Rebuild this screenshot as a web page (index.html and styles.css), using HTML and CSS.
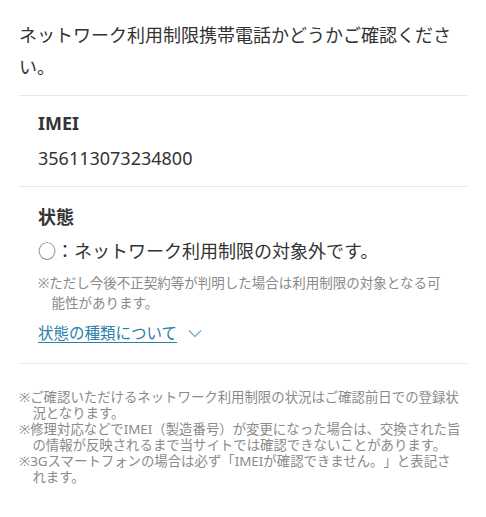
FILE: index.html
```html
<!DOCTYPE html>
<html lang="ja">
<head>
<meta charset="utf-8">
<title>ネットワーク利用制限</title>
<link rel="stylesheet" href="styles.css">
</head>
<body>
<main class="page">
  <p class="lead">ネットワーク利用制限携帯電話かどうかご確認ください。</p>
  <section class="item">
    <h2 class="item-title">IMEI</h2>
    <p class="item-value">356113073234800</p>
  </section>
  <section class="item item-status">
    <h2 class="item-title">状態</h2>
    <p class="status"><span class="mark">○</span>：ネットワーク利用制限の対象外です。</p>
    <p class="status-note">※ただし今後不正契約等が判明した場合は利用制限の対象となる可能性があります。</p>
    <a class="more" href="#">状態の種類について<svg class="chev" width="14" height="9" viewBox="0 0 14 9"><path d="M1 1.5 L7 7.5 L13 1.5" fill="none" stroke="#7fa9c4" stroke-width="1.3"/></svg></a>
  </section>
  <ul class="notes">
    <li>※ご確認いただけるネットワーク利用制限の状況はご確認前日での登録状況となります。</li>
    <li>※修理対応などでIMEI（製造番号）が変更になった場合は、交換された旨の情報が反映されるまで当サイトでは確認できないことがあります。</li>
    <li>※3Gスマートフォンの場合は必ず「IMEIが確認できません。」と表記されます。</li>
  </ul>
</main>
</body>
</html>
```
FILE: styles.css
```css
html, body {
  margin: 0;
  padding: 0;
  background: #ffffff;
}
body {
  font-family: "Noto Sans", "Noto Sans CJK JP", sans-serif;
  color: #333333;
  text-spacing-trim: space-all;
}
.page {
  padding: 19px 19px 0 19px;
}
.lead {
  margin: 0 0 12px 0;
  font-size: 18px;
  line-height: 32px;
}
.item {
  border-top: 1px solid #e6e6e6;
  padding: 15px 19px 16px 19px;
}
.item-title {
  margin: 0;
  font-size: 18px;
  font-weight: 700;
  line-height: 24px;
}
.item-value {
  margin: 11px 0 0 0;
  font-size: 18px;
  line-height: 24px;
}
.item-status {
  border-bottom: 1px solid #e6e6e6;
  padding-top: 18px;
  padding-bottom: 19px;
}
.status {
  margin: 8px 0 0 0;
  font-size: 18px;
  line-height: 26px;
}
.mark {
  font-family: "Noto Sans CJK JP", sans-serif;
  font-weight: 300;
  color: #555555;
}
.status-note {
  margin: 9px 0 0 0;
  padding-left: 1em;
  text-indent: -1em;
  font-size: 13.5px;
  line-height: 20px;
  color: #8a8a8a;
}
.more {
  display: inline-flex;
  align-items: center;
  gap: 11px;
  margin-top: 9px;
  font-size: 15.5px;
  line-height: 22px;
  color: #2b7fa9;
  text-decoration: underline;
  text-underline-offset: 3px;
}
.chev {
  display: block;
}
.notes {
  list-style: none;
  margin: 25px 0 0 0;
  padding: 0 5px 0 0;
  font-size: 13.4px;
  line-height: 16px;
  color: #8a8a8a;
}
.notes li {
  padding-left: 1em;
  text-indent: -1em;
}
```
